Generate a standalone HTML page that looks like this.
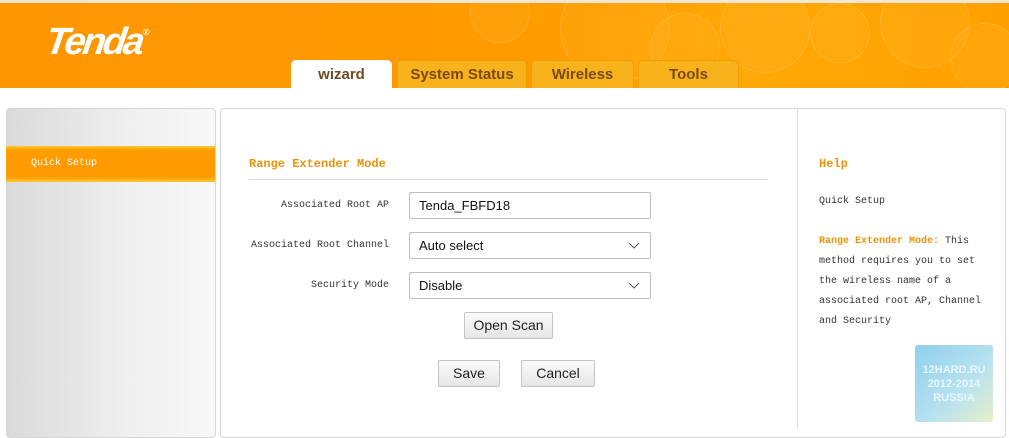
<!DOCTYPE html>
<html><head><meta charset="utf-8"><style>
*{margin:0;padding:0;box-sizing:border-box}
body{width:1009px;height:427px;overflow:hidden;background:#fff;position:relative;font-family:"Liberation Mono",monospace;}
.hdr{position:absolute;left:0;top:3px;width:1009px;height:85px;background:linear-gradient(90deg,#fe9600 0%,#ff9a00 50%,#ffa808 75%,#ffa000 100%);overflow:hidden}
.top{position:absolute;left:0;top:0;width:1009px;height:3px;background:#f4e7d3}
.bub{position:absolute;border-radius:50%;border:1px solid rgba(255,215,110,.25);background:rgba(255,200,70,.12)}
.logo{position:absolute;left:46px;top:18px;color:#fff;font:italic bold 38px "Liberation Sans",sans-serif;letter-spacing:-3px;transform:skewX(-8deg)}
.logo sup{font-size:9px;vertical-align:top;position:relative;top:6px;letter-spacing:0}
.tab{position:absolute;top:60px;height:28px;background:#f7b21c;border:1px solid #eea000;border-bottom:none;border-radius:5px 5px 0 0;color:#7a4a14;font:bold 15px "Liberation Sans",sans-serif;text-align:center;line-height:27px}
.tab.act{background:#fff;border-color:#fff;color:#6b4b22}
.left{position:absolute;left:6px;top:108px;width:210px;height:330px;border:1px solid #d6d6d6;border-radius:4px;background:linear-gradient(90deg,#dadada,#f0f0f0 60%,#f8f8f8)}
.qs{position:absolute;left:6px;top:146px;width:209px;height:36px;background:linear-gradient(#ffc830 0,#ff9c00 12%,#ff9a00 85%,#ffc830 100%);color:#fff;font-size:10px;line-height:36px;padding-left:25px}
.main{position:absolute;left:220px;top:108px;width:786px;height:330px;border:1px solid #d6d6d6;border-radius:4px}
.div{position:absolute;left:797px;top:109px;width:1px;height:320px;background:#ddd}
.t{position:absolute;font-size:10px;color:#333}
.lab{position:absolute;right:620px;font-size:10px;color:#333;text-align:right}
.ttl{position:absolute;left:249px;top:157px;font-weight:bold;font-size:12px;color:#e8940c}
.hr{position:absolute;left:249px;top:179px;width:519px;height:1px;background:#ddd}
.inp{position:absolute;left:409px;width:242px;height:27px;border:1px solid #bdbdbd;border-radius:2px;font:13px "Liberation Sans",sans-serif;color:#111;padding-left:9px;line-height:25px}
.inp svg{position:absolute;right:10px;top:9px}
.btn{position:absolute;height:27px;border:1px solid #c4c4c4;border-radius:2px;background:linear-gradient(#fafafa,#e6e6e6);font:14px "Liberation Sans",sans-serif;color:#222;text-align:center;line-height:25px}
.wm{position:absolute;left:915px;top:345px;width:78px;height:77px;border-radius:3px;background:linear-gradient(135deg,#8fd0ee,#b9e2ef 60%,#e8efc8);color:#e8f6ff;font:bold 11px "Liberation Sans",sans-serif;text-align:center;padding-top:18px;line-height:14px}
</style></head><body>
<div class="top"></div>
<div class="hdr">
<div class="bub" style="left:470px;top:-20px;width:60px;height:60px"></div>
<div class="bub" style="left:560px;top:-30px;width:110px;height:110px"></div>
<div class="bub" style="left:650px;top:10px;width:70px;height:70px"></div>
<div class="bub" style="left:720px;top:-20px;width:90px;height:90px"></div>
<div class="bub" style="left:810px;top:0px;width:60px;height:60px"></div>
<div class="bub" style="left:880px;top:-25px;width:90px;height:90px"></div>
<div class="bub" style="left:950px;top:20px;width:70px;height:70px"></div>
<div class="logo">Tenda<sup>®</sup></div>
</div>
<div class="tab act" style="left:291px;width:101px">wizard</div>
<div class="tab" style="left:397px;width:130px">System Status</div>
<div class="tab" style="left:531px;width:103px">Wireless</div>
<div class="tab" style="left:638px;width:101px">Tools</div>
<div class="left"></div>
<div class="qs">Quick Setup</div>
<div class="main"></div>
<div class="div"></div>
<div class="ttl">Range Extender Mode</div>
<div class="hr"></div>
<div class="lab" style="top:200px">Associated Root AP</div>
<div class="lab" style="top:240px">Associated Root Channel</div>
<div class="lab" style="top:280px">Security Mode</div>
<div class="inp" style="top:192px">Tenda_FBFD18</div>
<div class="inp" style="top:232px">Auto select<svg width="12" height="7"><path d="M1 1L6 6L11 1" fill="none" stroke="#555" stroke-width="1"/></svg></div>
<div class="inp" style="top:272px">Disable<svg width="12" height="7"><path d="M1 1L6 6L11 1" fill="none" stroke="#555" stroke-width="1"/></svg></div>
<div class="btn" style="left:464px;top:312px;width:89px">Open Scan</div>
<div class="btn" style="left:438px;top:360px;width:62px">Save</div>
<div class="btn" style="left:521px;top:360px;width:74px">Cancel</div>
<div class="ttl" style="left:819px;top:157px">Help</div>
<div class="t" style="left:819px;top:196px">Quick Setup</div>
<div class="t" style="left:819px;top:232px;width:180px;line-height:20px"><b style="color:#e8940c">Range Extender Mode:</b> This method requires you to set the wireless name of a associated root AP, Channel and Security</div>
<div class="wm">12HARD.RU<br>2012-2014<br>RUSSIA</div>
</body></html>
